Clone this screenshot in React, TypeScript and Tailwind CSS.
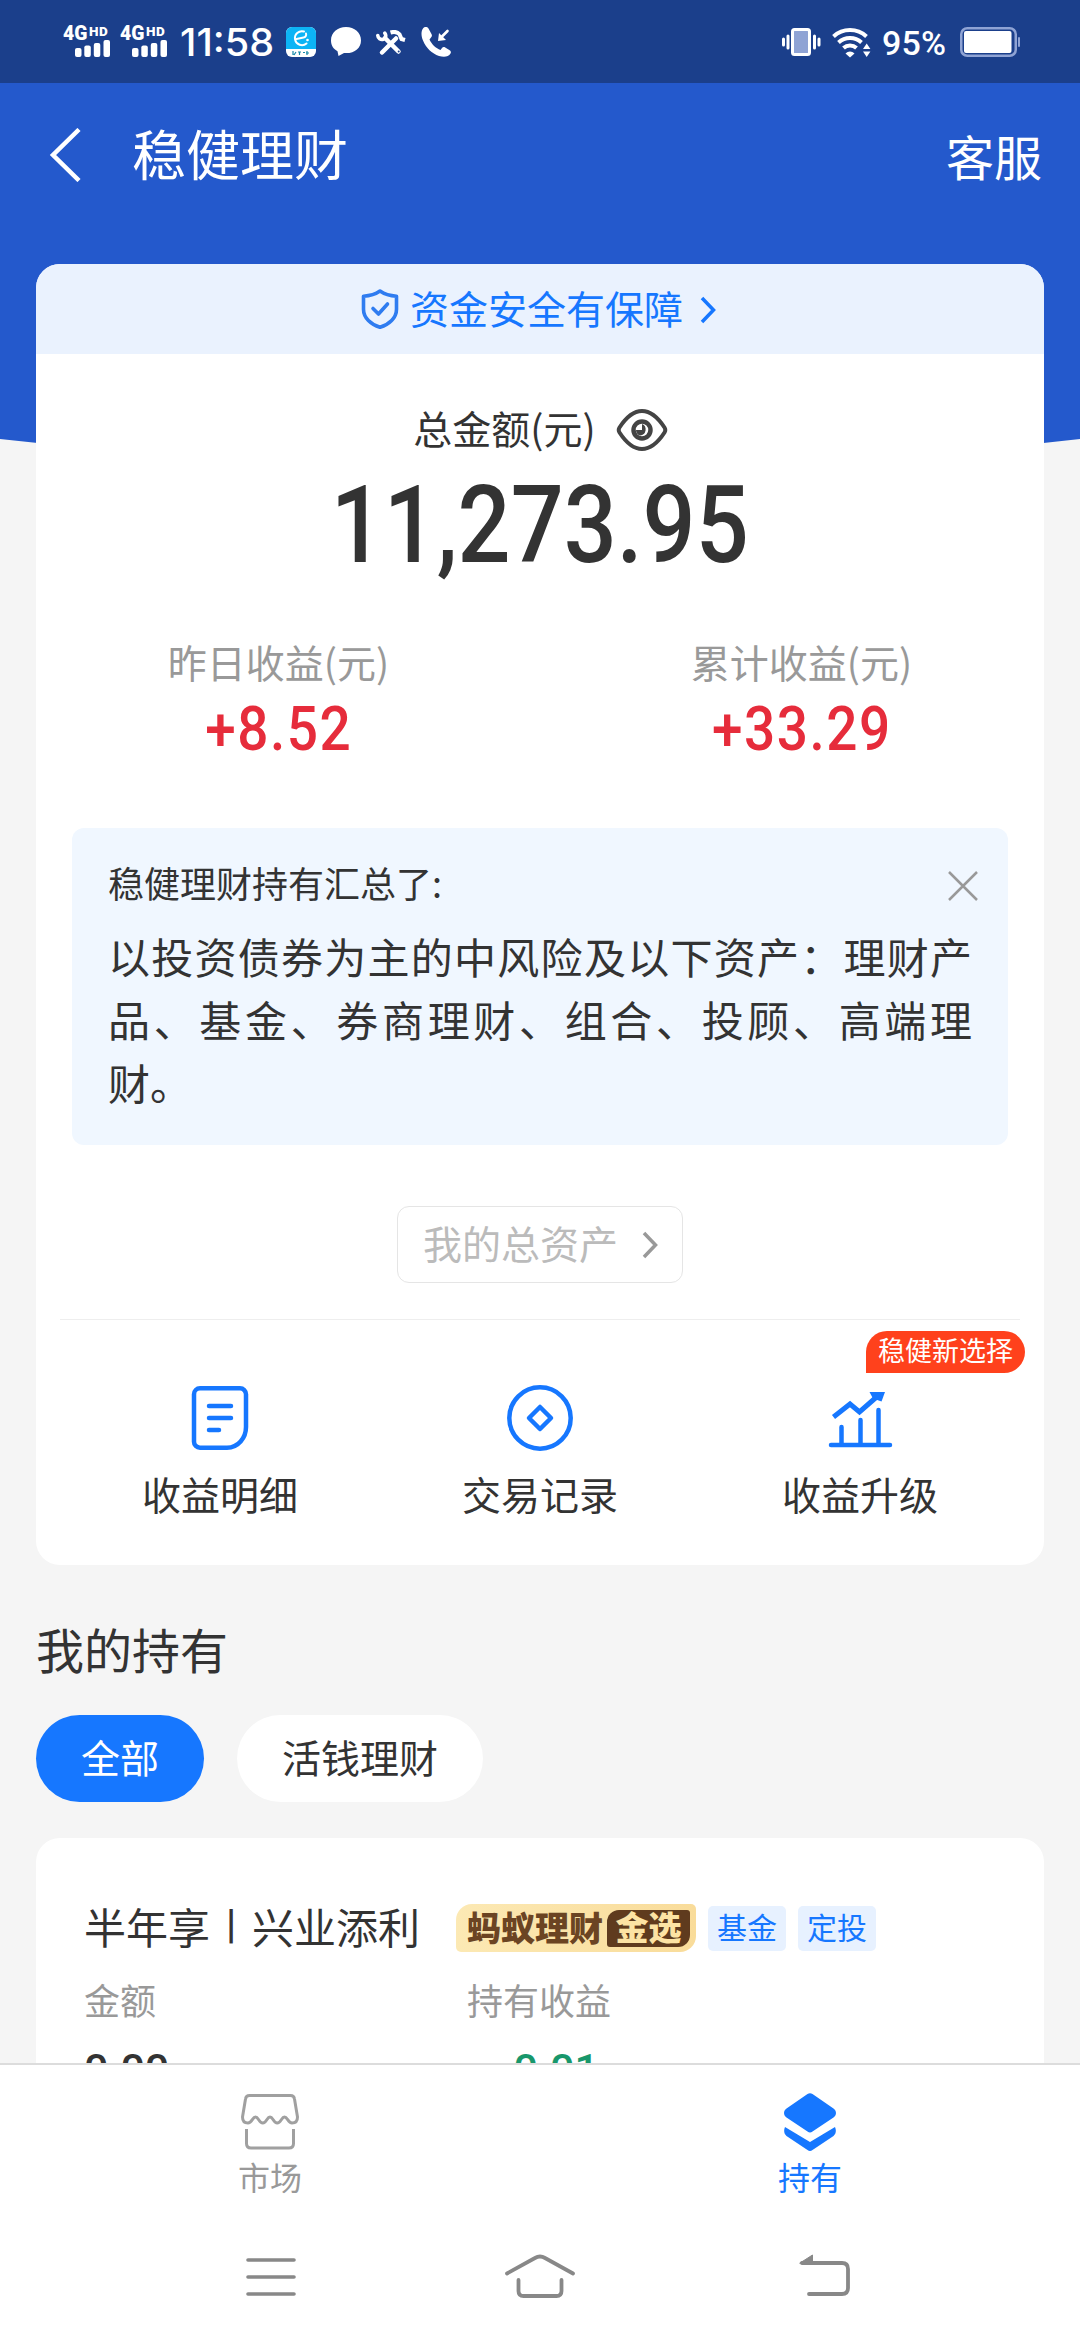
import type { ReactNode } from "react";

function Signal() {
  return (
    <div className="relative h-[32px] w-[48px]">
      <span className="absolute -top-px left-0 origin-left scale-x-[0.92] font-['Roboto'] text-[21px] leading-[18px] font-black">4G</span>
      <span className="absolute top-0 left-[26px] font-['Roboto'] text-[13.5px] leading-[12px] font-black tracking-[0.5px]">HD</span>
      <svg className="absolute top-[15px] left-[12px]" width="36" height="17" viewBox="0 0 36 17" fill="#fff">
        <rect x="0" y="8" width="6.500" height="9" rx="2" />
        <rect x="9.300" y="5.500" width="6.500" height="11.500" rx="2" />
        <rect x="18.800" y="3" width="6.500" height="14" rx="2" />
        <rect x="28.500" y="0" width="6.500" height="17" rx="2" />
      </svg>
    </div>
  );
}

function StatusBar() {
  return (
    <div className="flex h-[83px] items-start bg-[#1b3f8b] text-white">
      <div className="mt-[25px] ml-[63px] flex gap-[9px]">
        <Signal />
        <Signal />
      </div>
      <div className="mt-[24px] ml-[12px] w-[96px] origin-left scale-x-[1.04] font-['Inter'] text-[38px] leading-[36px] font-medium whitespace-nowrap">11:58</div>
      <svg className="mt-[27px] ml-[10px]" width="30" height="30" viewBox="0 0 30 30">
        <rect width="30" height="30" rx="6" fill="#fff" />
        <path d="M0 6a6 6 0 0 1 6-6h18a6 6 0 0 1 6 6v16H0z" fill="#0db4f5" />
        <path d="M18 4.500a7 7 0 1 0 2.500 12M10.500 12l7-1.500a3 3 0 0 0 2.500-4" fill="none" stroke="#fff" strokeWidth="2" strokeLinecap="round" />
        <circle cx="21.500" cy="13" r="1.300" fill="#fff" />
        <path d="M7 24v4M10 25l-2 3M12 25h3M13.500 25v3M17 25.500h2M21 24v4M23 26h-3" stroke="#1588a8" strokeWidth="1.200" />
      </svg>
      <svg className="mt-[27px] ml-[15px]" width="30" height="30" viewBox="0 0 30 30" fill="#fff">
        <path d="M15 0C6.500 0 0 5.500 0 13.500c0 5 2.500 8.500 6.500 10.700L7.500 29l5.500-3c10 1 17-4.500 17-12.500S23.500 0 15 0z" />
      </svg>
      <svg className="mt-[30px] ml-[15px]" width="30" height="26" viewBox="0 0 30 26" fill="none" stroke="#fff">
        <path d="M9 8L22.500 21.500" strokeWidth="4.500" strokeLinecap="round" />
        <path d="M1.800 5.500a4.200 4.200 0 0 0 5.500 3.800 4 4 0 0 0 1.500-6.200" strokeWidth="3.600" strokeLinecap="round" />
        <path d="M20 8.500L6 22.500" strokeWidth="4.500" strokeLinecap="round" />
        <path d="M14.500 2.500c4-1.200 7-.5 9 1.800l2 4.700 3.500 1" strokeWidth="4" />
        <circle cx="22.700" cy="21.500" r="1" fill="#1b3f8b" stroke="none" />
      </svg>
      <svg className="mt-[27px] ml-[15px]" width="30" height="30" viewBox="0 0 30 30">
        <path d="M2 1.500C.2 4-.2 8 2 13.500c3 7.500 9 13 16 15.500 5 1.500 9.500 1 11.500-2.500.8-1.500.3-2.500-.8-3.300l-4.500-2.700c-1.300-.7-2.400-.5-3.200.5l-1.500 2c-4.500-1.500-9-6-11-10.500L10 10.500c1-.9 1.200-2 .6-3.200L7.500 1.500C6-.5 3.500-.3 2 1.500z" fill="#fff" />
        <path d="M26.500 4L20 10.500" stroke="#fff" strokeWidth="2.600" strokeLinecap="round" />
        <path d="M17 14l1-8 7 7z" fill="#fff" />
      </svg>
      <div className="flex-1" />
      <svg className="mt-[28px]" width="39" height="28" viewBox="0 0 39 28">
        <rect x="10.500" y="1.500" width="17" height="25" rx="2" fill="#8fa3d4" stroke="#fff" strokeWidth="3" />
        <path d="M1.500 11v6M6 8v12M32.500 8v12M37 11v6" stroke="#fff" strokeWidth="3" strokeLinecap="round" />
      </svg>
      <svg className="mt-[28px] ml-[11px]" width="40" height="30" viewBox="0 0 40 30">
        <path d="M1.500 8.500a24.500 24.500 0 0 1 33 0M6.500 14.500a17 17 0 0 1 23 0M11.500 20a9.500 9.500 0 0 1 13 0" fill="none" stroke="#fff" strokeWidth="4" />
        <path d="M13.500 25.500c2.500-2.700 6.500-2.700 9 0L18 29.500z" fill="#fff" />
        <path d="M31 21l3.700-5.500L38.400 21zM31 23.500h7.400L34.700 29z" fill="#fff" />
      </svg>
      <div className="mt-[26px] ml-[10px] w-[68px] origin-left scale-x-[1.03] font-['Roboto'] text-[33px] leading-[36px] font-medium tracking-[0.2px] whitespace-nowrap">95%</div>
      <svg className="mt-[27px] mr-[59px] ml-[10px]" width="61" height="30" viewBox="0 0 61 30">
        <rect x="1.250" y="1.250" width="54.500" height="27.500" rx="6" fill="none" stroke="#8fa3d4" strokeWidth="2.500" />
        <rect x="4" y="4" width="47.500" height="22" rx="2" fill="#fff" />
        <rect x="58" y="10" width="2" height="10" rx="1" fill="#8fa3d4" />
      </svg>
    </div>
  );
}

function Header() {
  return (
    <div className="flex h-[181px] items-start text-white">
      <svg className="mt-[45px] ml-[48px]" width="34" height="54" viewBox="0 0 34 54" fill="none" stroke="#fff" strokeWidth="4.500">
        <path d="M31 1.500L5 27l26 25.500" />
      </svg>
      <div className="mt-[30px] ml-[50px] text-[54px] leading-[80px]">稳健理财</div>
      <div className="mt-[32px] mr-[38px] ml-auto text-[48px] leading-[80px]">客服</div>
    </div>
  );
}

function Chevron({ color, className }: { color: string; className?: string }) {
  return (
    <svg className={className} width="16" height="28" viewBox="0 0 16 28" fill="none" stroke={color} strokeWidth="3.500">
      <path d="M2 2l11.500 12L2 26" />
    </svg>
  );
}

function Income({ label, value }: { label: string; value: string }) {
  return (
    <div className="flex flex-1 flex-col items-center">
      <div className="text-[39px] leading-[56px] text-[#999]">{label}</div>
      <div className="mt-[6px] scale-x-[0.9] font-['Roboto'] text-[61px] leading-[68px] font-medium tracking-[1.700px] text-[#e62c3b]">{value}</div>
    </div>
  );
}

function Action({ icon, label }: { icon: ReactNode; label: string }) {
  return (
    <div className="flex flex-1 flex-col items-center">
      {icon}
      <div className="mt-[14px] text-[39px] leading-[56px] text-[#333]">{label}</div>
    </div>
  );
}

function SummaryCard() {
  return (
    <div className="mx-[36px] h-[1301px] overflow-hidden rounded-[24px] bg-white">
      <div className="flex h-[90px] items-center justify-center bg-[#eaf2fe] pr-[3px] text-[#1677ff]">
        <svg width="38" height="40" viewBox="0 0 38 40" fill="none" stroke="#2f7cf0" strokeWidth="3.600" strokeLinejoin="round" strokeLinecap="round">
          <path d="M19 2c4.500 3.200 9.500 4.800 16.500 5.200v13C35.500 29 28 35.500 19 38.300 10 35.500 2.500 29 2.500 20.200v-13C9.500 6.800 14.500 5.200 19 2z" />
          <path d="M12 19.500l5.500 5.500 9-10" />
        </svg>
        <span className="-mt-[4px] ml-[11px] text-[39px] leading-[56px]">资金安全有保障</span>
        <Chevron color="#1677ff" className="mt-px ml-[17px]" />
      </div>

      <div className="mt-[45px] flex h-[56px] items-center justify-center pl-px">
        <span className="text-[39px] leading-[56px] text-[#333]">总金额(元)</span>
        <svg className="mt-[6px] ml-[20px]" width="52" height="42" viewBox="0 0 52 42" fill="none" stroke="#444" strokeWidth="4">
          <path d="M3.500 18.500C11 7 19 2 26 2s15 5 22.500 16.500c1 1.600 1 3.400 0 5C41 35 33 40 26 40S11 35 3.500 23.500c-1-1.600-1-3.400 0-5z" />
          <circle cx="26" cy="21" r="8.500" strokeWidth="4.500" />
          <path d="M26 15v6h-6a6 6 0 0 0 4 5.500 6 6 0 0 0 2-11.500z" fill="#444" stroke="none" />
        </svg>
      </div>
      <div className="mt-[4px] flex h-[132px] justify-center">
        <div className="scale-x-[0.872] font-['Roboto'] text-[107px] leading-[134px] font-medium text-[#333] whitespace-nowrap">11,273.95</div>
      </div>

      <div className="mt-[42px] flex h-[193px]">
        <div className="flex w-[485px]">
          <Income label="昨日收益(元)" value="+8.52" />
        </div>
        <div className="ml-[38px] flex w-[485px]">
          <Income label="累计收益(元)" value="+33.29" />
        </div>
      </div>

      <div className="mx-[36px] mt-[2px] h-[317px] rounded-[12px] bg-[#f0f7ff] px-[36px] text-[#333]">
        <div className="flex justify-between">
          <div className="mt-[28px] text-[36px] leading-[52px]">稳健理财持有汇总了:</div>
          <svg className="mt-[42px] -mr-[7px]" width="32" height="32" viewBox="0 0 32 32" stroke="#999" strokeWidth="2.500">
            <path d="M2 2l28 28M30 2L2 30" />
          </svg>
        </div>
        <div className="mt-[16px] text-[42px] leading-[63px]">
          <div className="[text-align-last:justify]">以投资债券为主的中风险及以下资产：理财产</div>
          <div className="[text-align-last:justify]">品、基金、券商理财、组合、投顾、高端理</div>
          <div>财。</div>
        </div>
      </div>

      <div className="mx-auto mt-[61px] flex h-[77px] w-[286px] items-center rounded-[12px] border-[1.500px] border-[#e5e5e5] pl-[25px]">
        <span className="-mt-[6px] text-[39px] leading-[56px] text-[#bbb]">我的总资产</span>
        <Chevron color="#999" className="ml-[24px]" />
      </div>

      <div className="relative mx-[24px] mt-[36px] flex border-t-[1.500px] border-[#eee] pt-[65px]">
        <Action
          label="收益明细"
          icon={
            <svg width="66" height="66" viewBox="0 0 66 66" fill="none" stroke="#1677ff" strokeWidth="4.500" strokeLinecap="round">
              <path d="M13 3.300h40a6 6 0 0 1 6 6V42c0 11-8 20.700-19 20.700H13a6 6 0 0 1-6-6V9.300a6 6 0 0 1 6-6z" />
              <path d="M22 21h22M22 33h22M22 45h10" />
            </svg>
          }
        />
        <Action
          label="交易记录"
          icon={
            <svg width="66" height="66" viewBox="0 0 66 66" fill="none" stroke="#1677ff" strokeWidth="4.500" strokeLinejoin="round">
              <circle cx="33" cy="33" r="30.700" />
              <path d="M33 22l11 11-11 11-11-11z" />
            </svg>
          }
        />
        <Action
          label="收益升级"
          icon={
            <svg width="66" height="66" viewBox="0 0 66 66" fill="none" stroke="#1677ff" strokeWidth="4.500" strokeLinecap="round">
              <path d="M4 60h59M14.500 42v17M33.500 35v24M51.500 25v34" />
              <path d="M6.500 32L23 19l9.500 8L53 9" strokeWidth="5" strokeLinecap="butt" />
              <path d="M42.500 7h15.500l-3.500 9.500-8.500-3z" fill="#1677ff" stroke="none" />
            </svg>
          }
        />
        <div className="absolute top-[11px] -right-[5px] h-[42px] w-[159px] rounded-[21px] rounded-bl-none bg-[#ff411c] text-center text-[27px] leading-[38px] text-white">稳健新选择</div>
      </div>
    </div>
  );
}

function Holdings() {
  return (
    <div className="mx-[36px] mt-[36px] h-[225px] overflow-hidden rounded-t-[24px] bg-white pl-[48px]">
      <div className="mt-[55px] flex h-[70px] items-center">
        <div className="-mt-[5px] flex w-[372px] text-[42px] leading-[60px] text-[#333] whitespace-nowrap">
          <span>半年享</span>
          <span className="w-[42px] text-center font-['Roboto'] text-[41px] leading-[56px] font-medium">|</span>
          <span>兴业添利</span>
        </div>
        <div className="flex h-[48px] w-[240px] items-center rounded-[5px] rounded-tl-[16px] rounded-br-[16px] bg-gradient-to-r from-[#fce9b4] to-[#f9dc9a] pl-[11px]">
          <span className="-mt-[3px] w-[140px] text-[34px] leading-[48px] font-black text-[#6b4423]">蚂蚁理财</span>
          <span className="h-[37px] w-[83px] rounded-[3px] rounded-tl-[12px] rounded-br-[12px] bg-[#5f3b1e] text-center text-[33px] leading-[32px] font-black text-[#fce3a4]">金选</span>
        </div>
        <div className="ml-[12px] h-[45px] w-[78px] rounded-[5px] bg-[#e7f1ff] text-center text-[30px] leading-[41px] text-[#1677ff]">基金</div>
        <div className="ml-[12px] h-[45px] w-[78px] rounded-[5px] bg-[#e7f1ff] text-center text-[30px] leading-[41px] text-[#1677ff]">定投</div>
      </div>
      <div className="mt-[11px] flex text-[36px] leading-[50px] text-[#999]">
        <div className="w-[383px]">金额</div>
        <div>持有收益</div>
      </div>
      <div className="mt-[20px] flex font-['Roboto'] text-[43px] leading-[50px] font-medium">
        <div className="w-[383px] text-[#333]">0.00</div>
        <div className="ml-[32px] text-[#18976b]">-0.01</div>
      </div>
    </div>
  );
}

export default function App() {
  return (
    <div lang="zh-CN" className="relative h-[2340px] w-[1080px] overflow-hidden bg-[#f5f5f5] font-['Noto_Sans_CJK_SC',sans-serif]">
      <svg className="absolute top-0 left-0" width="1080" height="500" viewBox="0 0 1080 500">
        <path d="M0 0H1080V439Q540 500 0 439z" fill="#2459cc" />
      </svg>
      <div className="relative flex h-full flex-col">
        <StatusBar />
        <Header />
        <SummaryCard />
        <div className="mt-[48px] ml-[36px] text-[48px] leading-[70px] text-[#333]">我的持有</div>
        <div className="mt-[32px] ml-[36px] flex gap-[33px] text-center text-[39px] leading-[82px]">
          <div className="h-[87px] w-[168px] rounded-full bg-[#1677ff] text-white">全部</div>
          <div className="h-[87px] w-[246px] rounded-full bg-white text-[#333]">活钱理财</div>
        </div>
        <Holdings />

        <div className="flex h-[140px] border-t-2 border-[#dcdcdc] bg-white text-[32px] leading-[46px]">
          <div className="flex w-1/2 flex-col items-center pt-[28px] text-[#999]">
            <svg width="60" height="57" viewBox="0 0 60 57" fill="none" stroke="#a0a0a0" strokeWidth="3" strokeLinejoin="round">
              <path d="M9.500 2.500h41c2.500 0 3.700 1 4 3.500L57.500 24c0 4-2 6-5.500 6-4 0-4.500-6-7.500-6s-3.500 6-7.300 6c-3.700 0-4.200-6-7.200-6s-3.500 6-7.200 6c-3.800 0-4.300-6-7.300-6s-3.500 6-7.500 6c-3.500 0-5.500-2-5.500-6L5.500 6c.3-2.500 1.500-3.500 4-3.500z" />
              <path d="M6.500 36v14.500c0 3 1.500 4.500 4.500 4.500h38c3 0 4.500-1.500 4.500-4.500V36" />
            </svg>
            <div className="mt-[3px]">市场</div>
          </div>
          <div className="flex w-1/2 flex-col items-center pt-[28px] text-[#1677ff]">
            <svg width="52" height="58" viewBox="0 0 52 58" fill="#1677ff">
              <path d="M23.500 1c1.700-1 3.300-1 5 0l21 14.500c3.300 2.500 3.300 6.500 0 9L28.500 38.500c-1.700 1.200-3.300 1.200-5 0L2.500 24.500c-3.300-2.500-3.300-6.500 0-9z" />
              <path d="M1 34L26 49 51 34c1.500 3.500 1 7-1.500 9L28.500 57c-1.700 1.200-3.300 1.200-5 0L2.500 43C0 41-.5 37.500 1 34z" />
            </svg>
            <div className="mt-[2px]">持有</div>
          </div>
        </div>

        <div className="grid flex-1 grid-cols-3 items-start bg-white px-[132px] pt-[48px]">
          <svg className="ml-[112px]" width="54" height="50" viewBox="0 0 54 50" stroke="#888" strokeWidth="3.600" strokeLinecap="round">
            <path d="M4 9h46M4 26h46M4 43h46" />
          </svg>
          <svg className="justify-self-center" width="74" height="50" viewBox="0 0 74 50" fill="none" stroke="#888" strokeWidth="3.800" strokeLinecap="round" strokeLinejoin="round">
            <path d="M4 22.500L32 7q5-3 10 0l28 15.500M15.500 29v11q0 5 5 5h33q5 0 5-5V29" />
          </svg>
          <svg className="mr-[96px] justify-self-end" width="54" height="50" viewBox="0 0 54 50" fill="none" stroke="#888" strokeWidth="3.800" strokeLinecap="round" strokeLinejoin="round">
            <path d="M4 12h40q6 0 6 6v19q0 6-6 6H11" />
            <path d="M2 12L14.500 4v8z" fill="#888" strokeWidth="1" />
          </svg>
        </div>
      </div>
    </div>
  );
}
